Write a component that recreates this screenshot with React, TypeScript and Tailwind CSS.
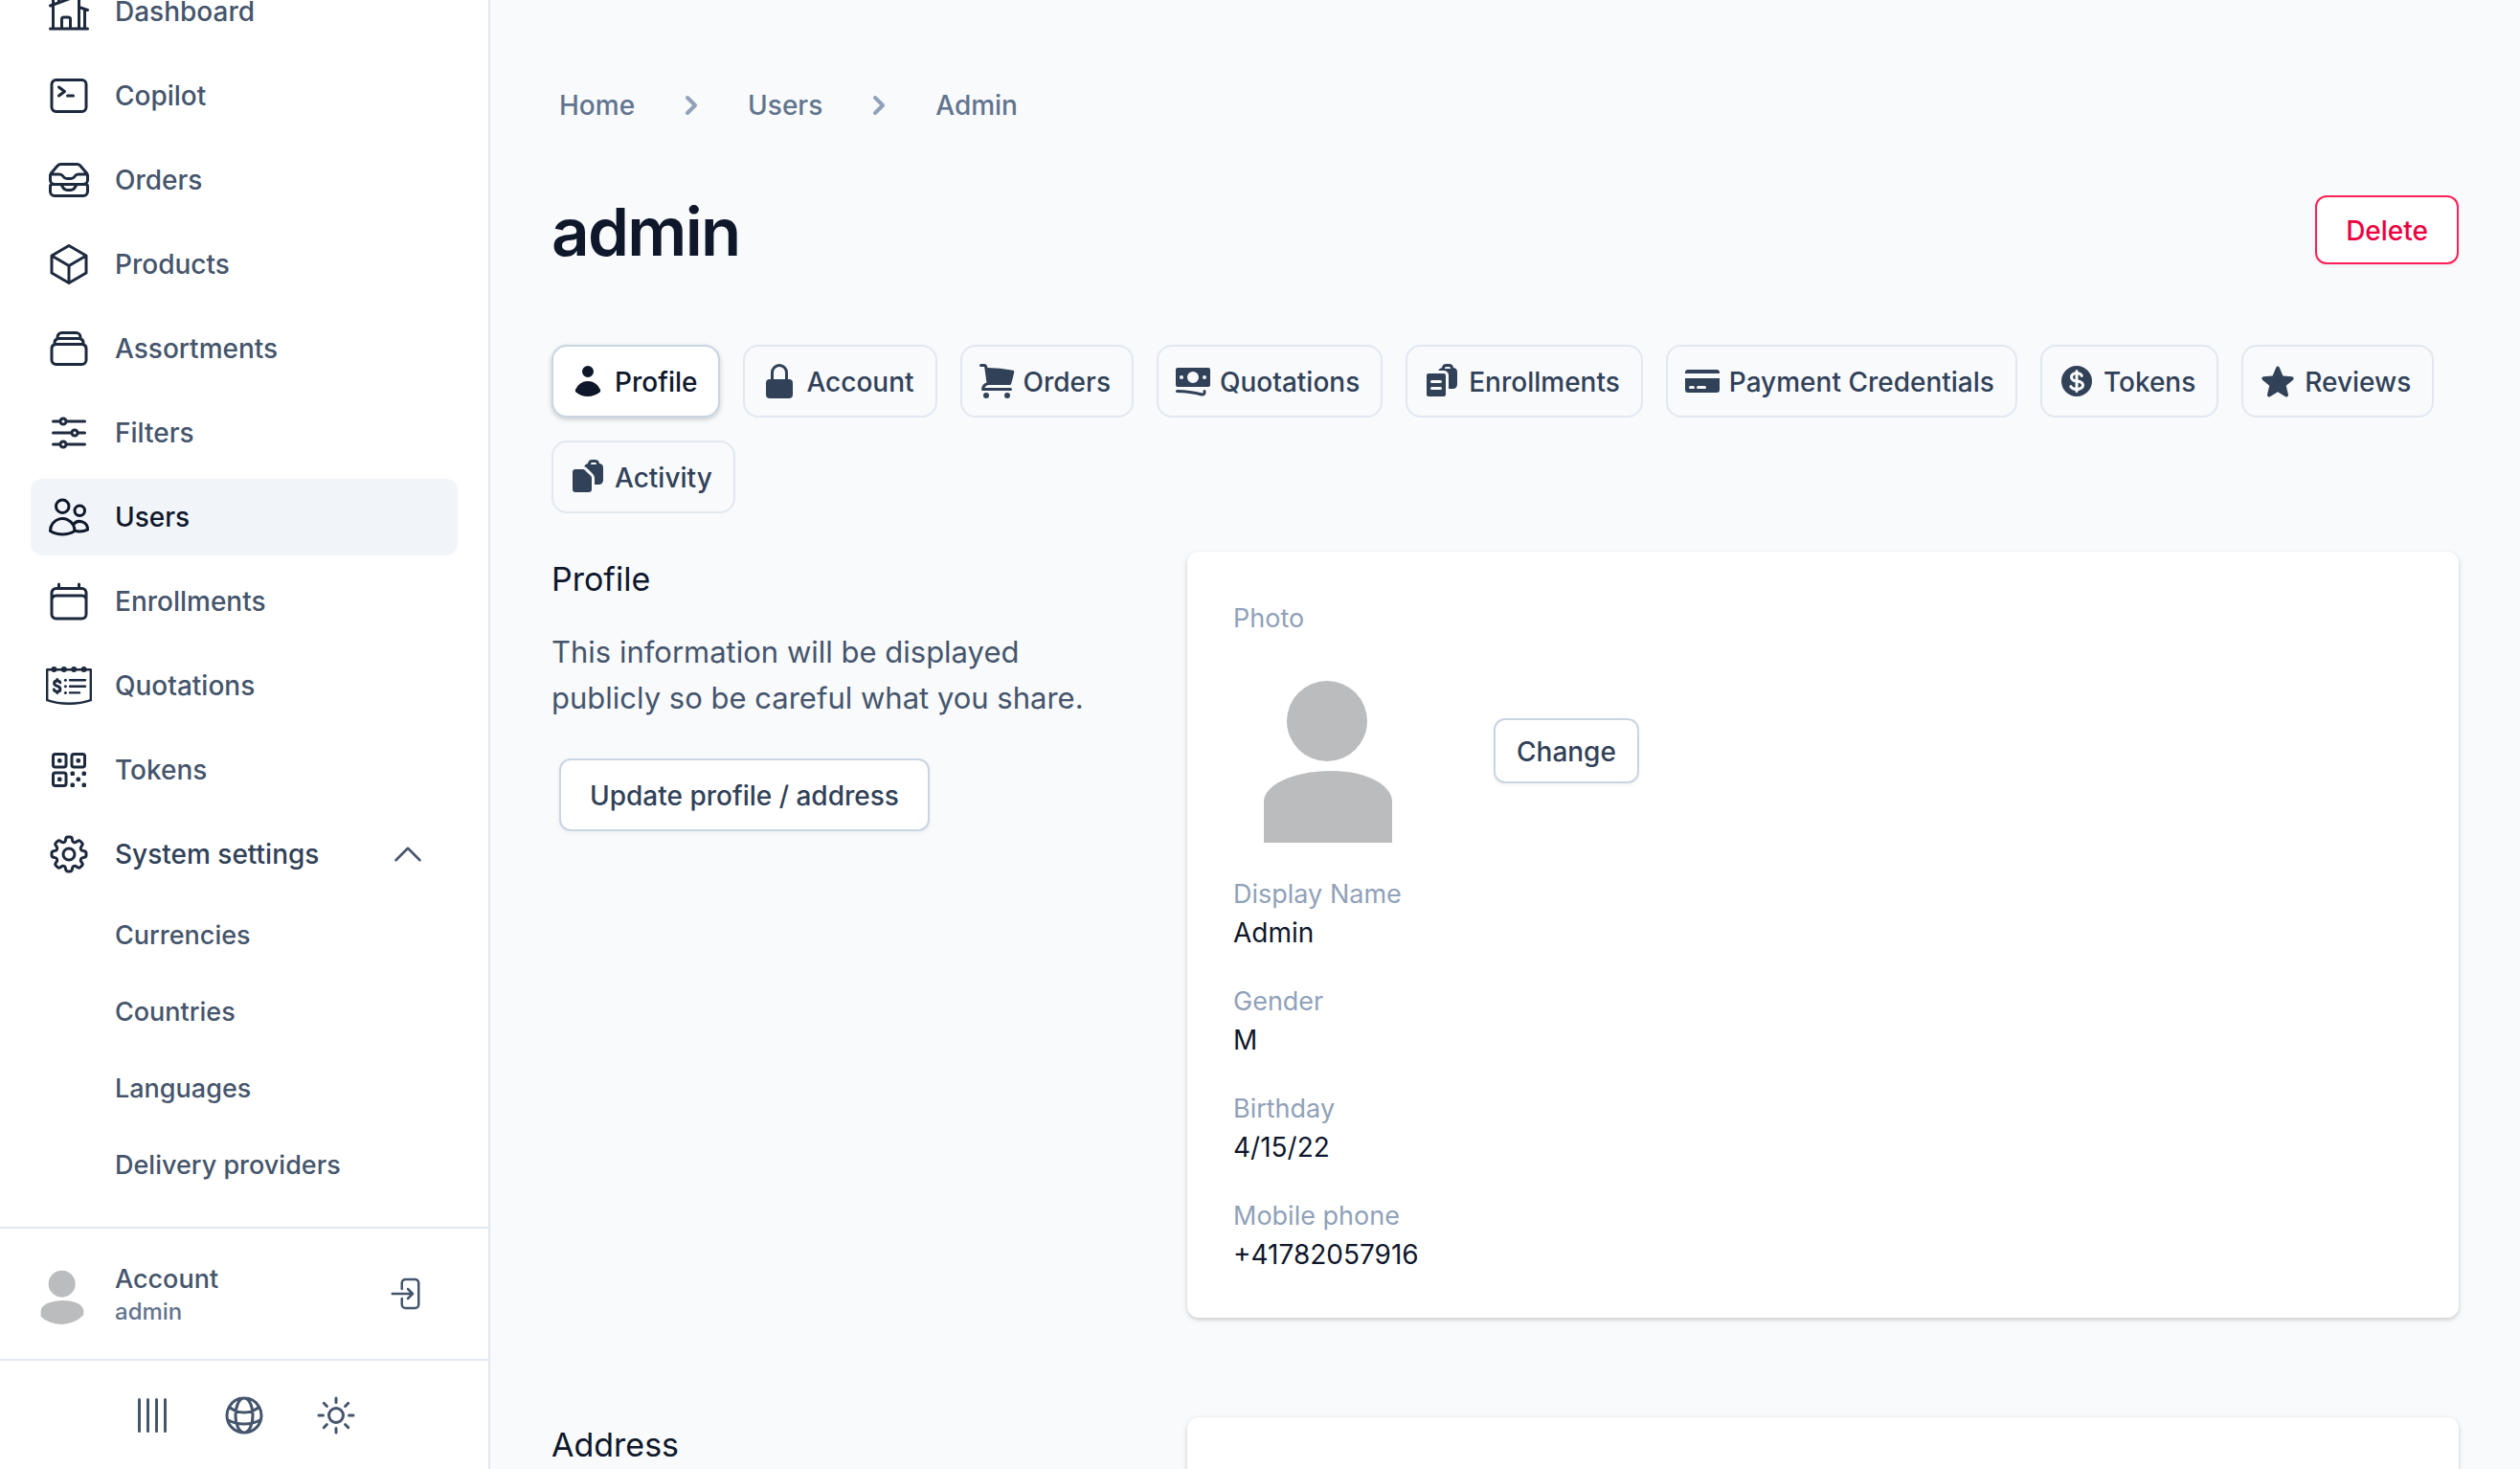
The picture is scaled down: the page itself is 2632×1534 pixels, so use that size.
import type { ComponentType, ReactNode } from 'react'
import { HiChevronRight } from 'react-icons/hi'
import {
  HiOutlineAdjustmentsHorizontal,
  HiOutlineBars4,
  HiOutlineCalendar,
  HiOutlineChevronUp,
  HiOutlineCog8Tooth,
  HiOutlineCommandLine,
  HiOutlineCube,
  HiOutlineGlobeAlt,
  HiOutlineHomeModern,
  HiOutlineInboxStack,
  HiOutlineQrCode,
  HiOutlineRectangleStack,
  HiOutlineSun,
  HiOutlineUsers,
  HiMiniBanknotes,
  HiMiniClipboardDocument,
  HiMiniClipboardDocumentList,
  HiMiniCreditCard,
  HiMiniCurrencyDollar,
  HiMiniLockClosed,
  HiMiniShoppingCart,
  HiMiniStar,
  HiMiniUser,
} from 'react-icons/hi2'

type Icon = ComponentType<{ className?: string }>

function QuotationIcon({ className }: { className?: string }) {
  return (
    <svg viewBox="0 0 48 48" fill="none" stroke="currentColor" className={className} aria-hidden="true">
      <path d="M1.2 7.2H46.8V39.2C39 42 31 42.8 24 42.8S9 42 1.2 39.2Z" strokeWidth="2.4" strokeLinejoin="round" />
      <g fill="currentColor" stroke="none">
        <circle cx="8.4" cy="7" r="3" />
        <circle cx="18.8" cy="7" r="3" />
        <circle cx="29.2" cy="7" r="3" />
        <circle cx="39.6" cy="7" r="3" />
        <circle cx="20.4" cy="18.2" r="1.5" />
        <circle cx="20.4" cy="24.8" r="1.5" />
        <circle cx="20.4" cy="31.4" r="1.5" />
      </g>
      <path d="M25 18.2H41M25 24.8H41M25 31.4H35" strokeWidth="2.4" strokeLinecap="round" />
      <path
        d="M14.8 20.8C14.4 19.4 13.2 19 11.8 19C9.8 19 8.6 20 8.6 21.6C8.6 25.2 14.9 23.6 14.9 27.4C14.9 29.2 13.6 30.2 11.8 30.2C9.8 30.2 8.6 29.4 8.3 28M11.8 17.4V19M11.8 30.4V31.6"
        strokeWidth="3"
        strokeLinecap="round"
      />
    </svg>
  )
}

function LogoutIcon({ className }: { className?: string }) {
  return (
    <svg viewBox="0 0 24 24" fill="none" stroke="currentColor" strokeWidth="1.5" strokeLinecap="round" strokeLinejoin="round" className={className} aria-hidden="true">
      <path d="M8.25 9V5.25A2.25 2.25 0 0 1 10.5 3h6a2.25 2.25 0 0 1 2.25 2.25v13.5A2.25 2.25 0 0 1 16.5 21h-6a2.25 2.25 0 0 1-2.25-2.25V15M12 9l3 3m0 0-3 3m3-3H2.25" />
    </svg>
  )
}

function Avatar({ className }: { className?: string }) {
  return (
    <svg viewBox="0 0 192 192" fill="#bbbcbe" className={className} role="img" aria-label="User photo">
      <circle cx="98" cy="65" r="42" />
      <path d="M32 192V149C32 133 60 117 103 117C141 117 166 133 166 149V192Z" />
    </svg>
  )
}

const navItems: { label: string; icon: Icon; active?: boolean }[] = [
  { label: 'Dashboard', icon: HiOutlineHomeModern },
  { label: 'Copilot', icon: HiOutlineCommandLine },
  { label: 'Orders', icon: HiOutlineInboxStack },
  { label: 'Products', icon: HiOutlineCube },
  { label: 'Assortments', icon: HiOutlineRectangleStack },
  { label: 'Filters', icon: HiOutlineAdjustmentsHorizontal },
  { label: 'Users', icon: HiOutlineUsers, active: true },
  { label: 'Enrollments', icon: HiOutlineCalendar },
  { label: 'Quotations', icon: QuotationIcon },
  { label: 'Tokens', icon: HiOutlineQrCode },
]

const settingsItems = ['Currencies', 'Countries', 'Languages', 'Delivery providers']

const tabs: { label: string; icon: Icon; active?: boolean }[] = [
  { label: 'Profile', icon: HiMiniUser, active: true },
  { label: 'Account', icon: HiMiniLockClosed },
  { label: 'Orders', icon: HiMiniShoppingCart },
  { label: 'Quotations', icon: HiMiniBanknotes },
  { label: 'Enrollments', icon: HiMiniClipboardDocumentList },
  { label: 'Payment Credentials', icon: HiMiniCreditCard },
  { label: 'Tokens', icon: HiMiniCurrencyDollar },
  { label: 'Reviews', icon: HiMiniStar },
  { label: 'Activity', icon: HiMiniClipboardDocument },
]

const details = [
  ['Display Name', 'Admin'],
  ['Gender', 'M'],
  ['Birthday', '4/15/22'],
  ['Mobile phone', '+41782057916'],
]

function Sidebar() {
  return (
    <aside className="flex w-[512px] shrink-0 flex-col border-r-2 border-slate-200 bg-white font-medium text-slate-600">
      <nav className="flex min-h-0 flex-1 flex-col justify-end overflow-hidden px-8 pb-6">
        <ul className="flex flex-col gap-2">
          {navItems.map(({ label, icon: ItemIcon, active }) => (
            <li key={label}>
              <a
                href="#"
                className={
                  active
                    ? 'flex h-20 items-center gap-6 rounded-xl bg-slate-100 px-4 text-slate-900'
                    : 'flex h-20 items-center gap-6 rounded-xl px-4'
                }
              >
                <ItemIcon className={active ? 'size-12 text-slate-900' : 'size-12 text-slate-800'} />
                {label}
              </a>
            </li>
          ))}
          <li>
            <button type="button" aria-expanded="true" className="flex h-20 w-full items-center gap-6 px-4 text-slate-700">
              <HiOutlineCog8Tooth className="size-12 text-slate-800" />
              System settings
              <HiOutlineChevronUp className="mr-4 ml-auto size-10 text-slate-600" />
            </button>
            <ul className="mt-[5px]">
              {settingsItems.map((label) => (
                <li key={label}>
                  <a href="#" className="flex h-20 items-center pl-22 text-[27px]">
                    {label}
                  </a>
                </li>
              ))}
            </ul>
          </li>
        </ul>
      </nav>
      <div className="flex h-[138px] items-center border-t-2 border-slate-200 px-8">
        <Avatar className="size-16 rounded-full" />
        <div className="ml-6 flex-1 pt-0.5">
          <div className="text-[27px] leading-9">Account</div>
          <div className="text-2xl leading-8 text-slate-500">admin</div>
        </div>
        <button type="button" aria-label="Log out" className="mr-8">
          <LogoutIcon className="size-10" />
        </button>
      </div>
      <div className="flex h-[115px] items-center justify-center gap-12 border-t-2 border-slate-200">
        <button type="button" aria-label="Collapse sidebar">
          <HiOutlineBars4 className="size-12 rotate-90" />
        </button>
        <button type="button" aria-label="Language">
          <HiOutlineGlobeAlt className="size-12" />
        </button>
        <button type="button" aria-label="Light theme">
          <HiOutlineSun className="size-12" />
        </button>
      </div>
    </aside>
  )
}

function Section({ title, intro, children }: { title: string; intro?: ReactNode; children: ReactNode }) {
  return (
    <section className="grid grid-cols-3">
      <div className="pr-16">
        <h2 className="pt-px text-[34px] leading-14 text-slate-900">{title}</h2>
        {intro}
      </div>
      <div className="col-span-2 rounded-xl bg-white px-12 pt-[50px] pb-[46px] shadow-[0_2px_6px_rgba(0,0,0,0.1),0_2px_4px_rgba(0,0,0,0.1)]">
        {children}
      </div>
    </section>
  )
}

export default function App() {
  return (
    <div className="flex h-screen overflow-hidden bg-slate-50 font-['Inter',sans-serif] text-[28px] leading-10">
      <Sidebar />
      <main className="min-w-0 flex-1 overflow-hidden px-16 pt-[90px]">
        <nav aria-label="Breadcrumb">
          <ol className="flex items-center gap-[39px] pl-2 font-medium text-slate-500">
            <li>
              <a href="#">Home</a>
            </li>
            <li className="flex items-center gap-[39px]">
              <HiChevronRight className="size-10 text-slate-400" />
              <a href="#">Users</a>
            </li>
            <li className="flex items-center gap-[39px]">
              <HiChevronRight className="size-10 text-slate-400" />
              <a href="#">Admin</a>
            </li>
          </ol>
        </nav>

        <div className="mt-[70px] flex items-center justify-between">
          <h1 className="pt-1 text-[69px] leading-19 font-semibold tracking-tight text-slate-900">admin</h1>
          <button
            type="button"
            className="h-18 rounded-xl border-2 border-rose-500 bg-white px-[30px] pt-0.5 font-medium text-rose-600 shadow-[0_2px_4px_rgba(0,0,0,0.05)]"
          >
            Delete
          </button>
        </div>

        <div role="tablist" className="mt-20 flex flex-wrap gap-6">
          {tabs.map(({ label, icon: TabIcon, active }) => (
            <button
              key={label}
              type="button"
              role="tab"
              aria-selected={Boolean(active)}
              className={
                active
                  ? 'flex h-19 items-center gap-2 rounded-2xl border-2 border-slate-300 bg-white pr-[22px] pl-4 font-medium text-slate-900 shadow-[0_2px_6px_rgba(0,0,0,0.1),0_2px_4px_rgba(0,0,0,0.1)]'
                  : 'flex h-19 items-center gap-2 rounded-2xl border-2 border-slate-200 pr-[22px] pl-4 font-medium text-slate-700'
              }
            >
              <TabIcon className="size-10" />
              <span className="pt-0.5">{label}</span>
            </button>
          ))}
        </div>

        <div className="mt-10 flex flex-col gap-26">
          <Section
            title="Profile"
            intro={
              <>
                <p className="mt-6 text-[31px] leading-12 text-slate-600">
                  This information will be displayed publicly so be careful what you share.
                </p>
                <button
                  type="button"
                  className="mt-[39px] ml-2 h-19 rounded-xl border-2 border-slate-300 bg-white px-[30px] pt-0.5 font-medium text-slate-700 shadow-[0_2px_4px_rgba(0,0,0,0.05)]"
                >
                  Update profile / address
                </button>
              </>
            }
          >
            <dl className="flex flex-col gap-8">
              <div className="pb-0.5">
                <dt className="text-[27px] text-slate-400">Photo</dt>
                <dd className="mt-[22px] flex items-center gap-20">
                  <Avatar className="size-48" />
                  <button
                    type="button"
                    className="h-17 rounded-xl border-2 border-slate-300 bg-white px-[22px] pt-0.5 font-medium text-slate-700 shadow-[0_2px_4px_rgba(0,0,0,0.05)]"
                  >
                    Change
                  </button>
                </dd>
              </div>
              {details.map(([term, value]) => (
                <div key={term}>
                  <dt className="text-[27px] text-slate-400">{term}</dt>
                  <dd className="text-slate-900">{value}</dd>
                </div>
              ))}
            </dl>
          </Section>
          <Section title="Address">
            <div className="h-48" />
          </Section>
        </div>
      </main>
    </div>
  )
}
